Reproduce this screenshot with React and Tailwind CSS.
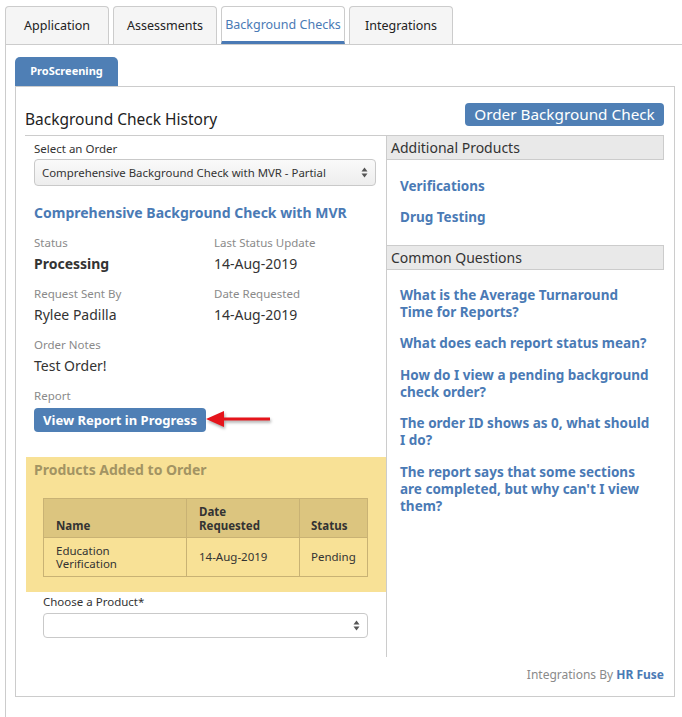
import React from 'react';

const tabs = [
  { label: 'Application', width: 'w-[104px]' },
  { label: 'Assessments', width: 'w-[104px]' },
  { label: 'Background Checks', width: 'w-[124px]', active: true },
  { label: 'Integrations', width: 'w-[104px]' },
];

const questions = [
  ['What is the Average Turnaround', 'Time for Reports?'],
  ['What does each report status mean?'],
  ['How do I view a pending background', 'check order?'],
  ['The order ID shows as 0, what should', 'I do?'],
  ['The report says that some sections', "are completed, but why can't I view", 'them?'],
];

// little up/down caret pair used by the native-looking selects
const SelectCaret = () => (
  <svg width="7" height="11" viewBox="0 0 7 11" className="shrink-0">
    <path d="M3.5 0.5 L6.5 4.5 L0.5 4.5 Z" fill="#555" />
    <path d="M3.5 10.5 L6.5 6.5 L0.5 6.5 Z" fill="#555" />
  </svg>
);

const Field = ({ label, value, bold }) => (
  <div className="mb-[12px]">
    <div className="text-[11.5px] leading-[16px] text-[#8a8a8a]">{label}</div>
    <div className={`mt-[3px] text-[14px] leading-[20px] text-[#333] ${bold ? 'font-bold' : ''}`}>{value}</div>
  </div>
);

const RedArrow = () => (
  <svg width="72" height="26" viewBox="0 0 72 26" className="-ml-px drop-shadow-[1px_2px_1.5px_rgba(0,0,0,0.35)]">
    <path d="M1 12 L19 4 L19 10.5 L65 10.5 L65 13.5 L19 13.5 L19 20 Z" fill="#e5141b" />
  </svg>
);

export default function App() {
  return (
    <div className="min-h-screen bg-white font-['Noto_Sans',sans-serif] text-[#333]">
      {/* top level tabs */}
      <div className="flex items-end gap-[4px] pl-[5px] pt-[6px]">
        {tabs.map((tab) =>
          tab.active ? (
            <div
              key={tab.label}
              className={`${tab.width} flex h-[38px] items-center justify-center rounded-t-[4px] border border-b-[3px] border-[#ccc] border-b-[#4a7ab5] bg-white pt-[3px] text-[12.5px] text-[#4a7ab5]`}
            >
              {tab.label}
            </div>
          ) : (
            <div
              key={tab.label}
              className={`${tab.width} flex h-[38px] items-center justify-center rounded-t-[4px] border border-b-0 border-[#ccc] bg-[#f5f5f5] pt-[1px] text-[12.5px] text-[#222]`}
            >
              {tab.label}
            </div>
          )
        )}
      </div>

      <div className="ml-[5px] min-h-[673px] border-l border-t border-[#ccc] pl-[9px] pt-[12px]">
        <div className="flex h-[29px] w-[103px] items-center justify-center rounded-t-[5px] bg-[#4f7fb5] text-[11px] font-bold text-white">
          ProScreening
        </div>

        <div className="w-[660px] border border-[#ccc] pl-[9px] pr-[10px]">
          {/* heading row */}
          <div className="flex h-[48px] items-start justify-between pt-[16px]">
            <h2 className="mt-[5px] text-[15.5px] leading-[22px] text-[#222]">Background Check History</h2>
            <button className="h-[23px] w-[199px] rounded-[4px] bg-[#4f7fb5] text-[15.3px] leading-[23px] text-white">
              Order Background Check
            </button>
          </div>

          <div className="flex">
            {/* order details */}
            <div className="w-[362px] border-r border-t border-[#ccc] pb-[19px]">
              <div className="pl-[9px] pr-[10px] pt-[5px]">
                <div className="text-[11.5px] leading-[16px] text-[#333]">Select an Order</div>
                <div className="mt-[2px] flex h-[27px] items-center justify-between rounded-[4px] border border-[#c9c9c9] bg-gradient-to-b from-[#fafafa] to-[#ededed] pl-[7px] pr-[7px] text-[11.4px]">
                  <span>Comprehensive Background Check with MVR - Partial</span>
                  <SelectCaret />
                </div>

                <div className="mt-[17px] text-[14px] font-bold leading-[20px] text-[#4a7ab5]">
                  Comprehensive Background Check with MVR
                </div>

                <div className="mt-[12px] grid grid-cols-[180px_1fr]">
                  <Field label="Status" value="Processing" bold />
                  <Field label="Last Status Update" value="14-Aug-2019" />
                  <Field label="Request Sent By" value="Rylee Padilla" />
                  <Field label="Date Requested" value="14-Aug-2019" />
                  <Field label="Order Notes" value="Test Order!" />
                </div>

                <div className="text-[11.5px] leading-[16px] text-[#8a8a8a]">Report</div>
                <div className="mt-[3px] flex items-center">
                  <button className="h-[24px] w-[172px] rounded-[4px] bg-[#4f7fb5] text-[13px] font-bold leading-[24px] text-white">
                    View Report in Progress
                  </button>
                  <RedArrow />
                </div>
              </div>

              {/* products already on the order */}
              <div className="ml-[1px] mt-[24px] bg-[#f8e196] pb-[15px] pl-[8px] pt-[3px]">
                <div className="text-[14px] font-bold leading-[20px] text-[#a39463]">Products Added to Order</div>
                <table className="ml-[9px] mt-[18px] w-[325px] border-collapse text-[11.5px] text-[#333]">
                  <thead>
                    <tr className="h-[39px] bg-[#dcc57f]">
                      <th className="w-[143px] border border-[#c9b274] pb-[5px] pl-[12px] text-left align-bottom font-bold leading-[13.5px]">Name</th>
                      <th className="w-[113px] border border-[#c9b274] pb-[5px] pl-[12px] text-left align-bottom font-bold leading-[13.5px]">
                        Date
                        <br />
                        Requested
                      </th>
                      <th className="border border-[#c9b274] pb-[5px] pl-[11px] text-left align-bottom font-bold leading-[13.5px]">Status</th>
                    </tr>
                  </thead>
                  <tbody>
                    <tr className="h-[39px]">
                      <td className="border border-[#c9b274] pl-[12px] leading-[13.5px]">
                        Education
                        <br />
                        Verification
                      </td>
                      <td className="border border-[#c9b274] pl-[12px]">14-Aug-2019</td>
                      <td className="border border-[#c9b274] pl-[11px]">Pending</td>
                    </tr>
                  </tbody>
                </table>
              </div>

              <div className="pl-[18px] pr-[18px] pt-[2px]">
                <div className="text-[11.5px] leading-[16px] text-[#333]">Choose a Product*</div>
                <div className="mt-[3px] flex h-[25px] items-center justify-end rounded-[4px] border border-[#c9c9c9] bg-white pr-[7px]">
                  <SelectCaret />
                </div>
              </div>
            </div>

            {/* sidebar */}
            <div className="flex-1">
              <div className="-ml-px h-[25px] border border-[#ccc] bg-[#e9e9e9] pl-[4px] text-[14px] leading-[23px] text-[#333]">
                Additional Products
              </div>
              <div className="flex flex-col gap-[14px] pb-[19px] pl-[13px] pt-[18px] text-[13.5px] font-bold leading-[17px] text-[#4a7ab5]">
                <a>Verifications</a>
                <a>Drug Testing</a>
              </div>

              <div className="-ml-px h-[25px] border border-[#ccc] bg-[#e9e9e9] pl-[4px] text-[14px] leading-[23px] text-[#333]">
                Common Questions
              </div>
              <div className="flex flex-col gap-[14.5px] pl-[13px] pt-[16.5px] text-[13.5px] font-bold leading-[17px] text-[#4a7ab5]">
                {questions.map((lines) => (
                  <a key={lines[0]} className="block">
                    {lines.map((line) => (
                      <span key={line} className="block whitespace-nowrap">
                        {line}
                      </span>
                    ))}
                  </a>
                ))}
              </div>
            </div>
          </div>

          <div className="mt-[10px] pb-[13px] text-right text-[12px] leading-[16px] text-[#8a8a8a]">
            Integrations By <span className="font-bold text-[#4a7ab5]">HR Fuse</span>
          </div>
        </div>
      </div>
    </div>
  );
}
